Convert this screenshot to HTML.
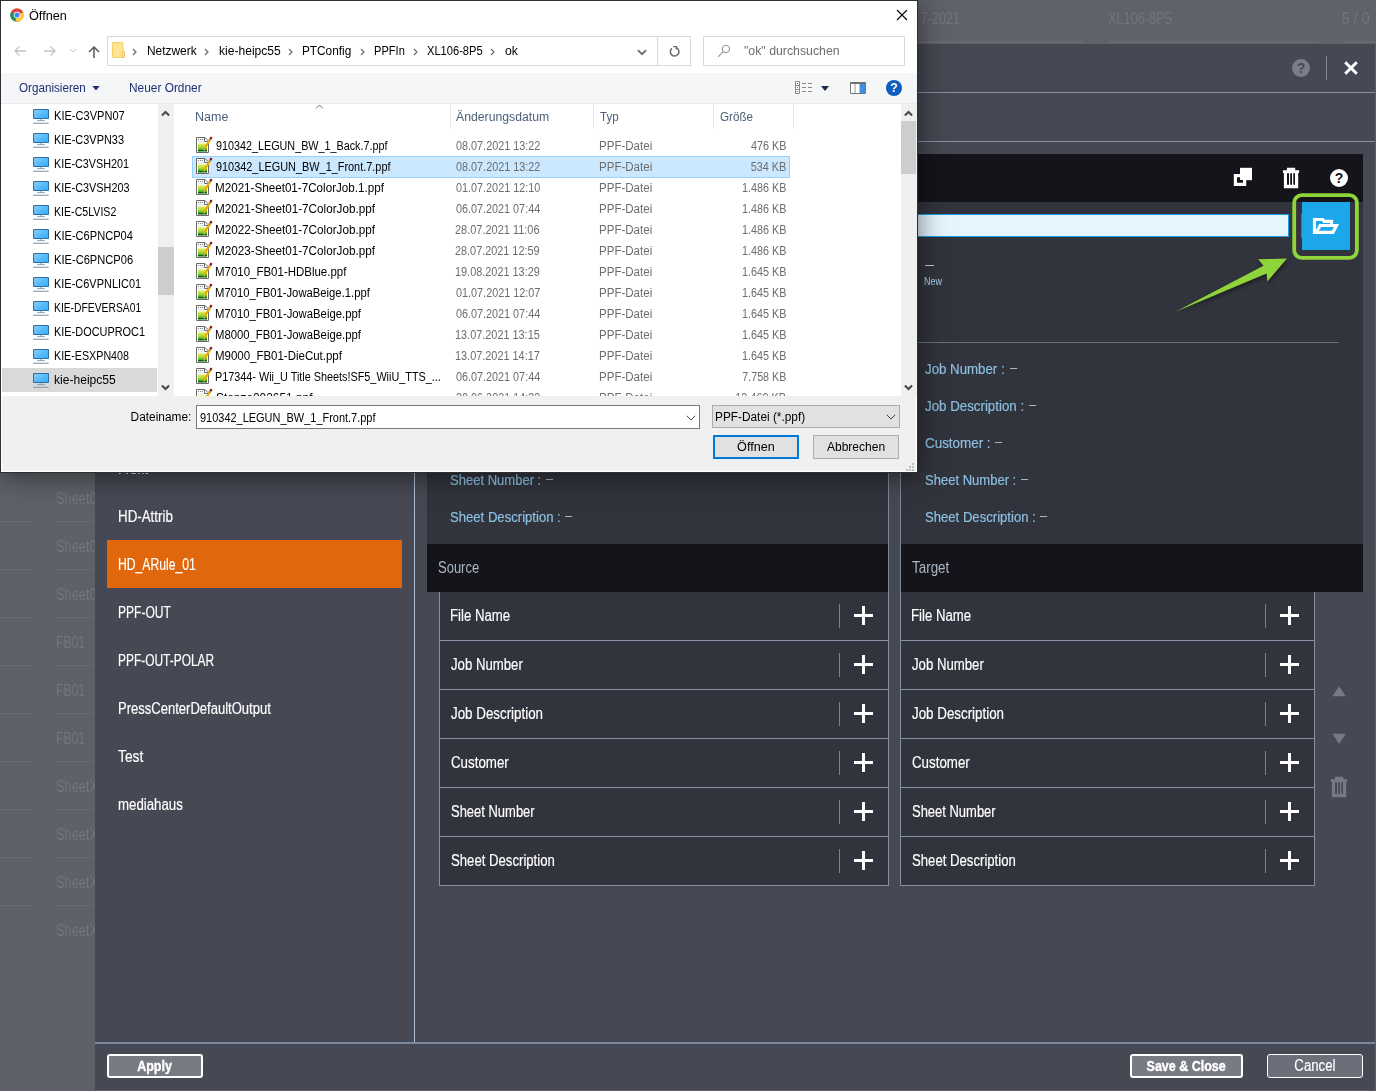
<!DOCTYPE html>
<html lang="de"><head><meta charset="utf-8"><title>Öffnen</title>
<style>
*{box-sizing:border-box;margin:0;padding:0}
html,body{width:1376px;height:1091px;overflow:hidden;background:#5e6169;font-family:"Liberation Sans",sans-serif}
.abs,.abs *{position:absolute}
#app{left:0;top:0;width:1376px;height:1091px;overflow:hidden}
.t{display:block;white-space:nowrap}
</style></head><body>
<div id="app" class="abs">

<div style="left:0;top:0;width:1376px;height:44px;background:#5f6269"></div>
<div style="left:0;top:44px;width:95px;height:1047px;background:#5e6169"></div>
<span class="t" style="left:909.53px;top:8.76px;font-size:16px;line-height:20px;color:#72757d;transform:scaleX(0.7900);transform-origin:100% 50%">7-2021</span>
<span class="t" style="left:1107.75px;top:8.76px;font-size:16px;line-height:20px;color:#72757d;transform:scaleX(0.7963);transform-origin:0 50%">XL106-8P5</span>
<span class="t" style="left:1342.43px;top:8.76px;font-size:16px;line-height:20px;color:#72757d;transform:scaleX(0.8857);transform-origin:0 50%">5 / 0</span>
<div style="left:840px;top:41px;width:244px;height:2px;background:#676a72"></div>
<div style="left:1108px;top:41px;width:210px;height:2px;background:#676a72"></div>
<div style="left:1343px;top:41px;width:33px;height:2px;background:#676a72"></div>
<span class="t" style="left:55.92px;top:488.76px;font-size:16px;line-height:20px;color:#72757d;transform:scaleX(0.8000);transform-origin:0 50%">Sheet0</span>
<span class="t" style="left:55.92px;top:536.76px;font-size:16px;line-height:20px;color:#72757d;transform:scaleX(0.8000);transform-origin:0 50%">Sheet0</span>
<span class="t" style="left:55.92px;top:584.76px;font-size:16px;line-height:20px;color:#72757d;transform:scaleX(0.8000);transform-origin:0 50%">Sheet0</span>
<span class="t" style="left:55.53px;top:632.76px;font-size:16px;line-height:20px;color:#72757d;transform:scaleX(0.7600);transform-origin:0 50%">FB01</span>
<span class="t" style="left:55.53px;top:680.76px;font-size:16px;line-height:20px;color:#72757d;transform:scaleX(0.7600);transform-origin:0 50%">FB01</span>
<span class="t" style="left:55.53px;top:728.76px;font-size:16px;line-height:20px;color:#72757d;transform:scaleX(0.7600);transform-origin:0 50%">FB01</span>
<span class="t" style="left:55.92px;top:776.76px;font-size:16px;line-height:20px;color:#72757d;transform:scaleX(0.8000);transform-origin:0 50%">SheetX</span>
<span class="t" style="left:55.92px;top:824.76px;font-size:16px;line-height:20px;color:#72757d;transform:scaleX(0.8000);transform-origin:0 50%">SheetX</span>
<span class="t" style="left:55.92px;top:872.76px;font-size:16px;line-height:20px;color:#72757d;transform:scaleX(0.8000);transform-origin:0 50%">SheetX</span>
<span class="t" style="left:55.92px;top:920.76px;font-size:16px;line-height:20px;color:#72757d;transform:scaleX(0.8000);transform-origin:0 50%">SheetX</span>
<div style="left:0;top:521px;width:32px;height:1px;background:#676a72"></div>
<div style="left:56px;top:521px;width:40px;height:1px;background:#676a72"></div>
<div style="left:0;top:569px;width:32px;height:1px;background:#676a72"></div>
<div style="left:56px;top:569px;width:40px;height:1px;background:#676a72"></div>
<div style="left:0;top:617px;width:32px;height:1px;background:#676a72"></div>
<div style="left:56px;top:617px;width:40px;height:1px;background:#676a72"></div>
<div style="left:0;top:665px;width:32px;height:1px;background:#676a72"></div>
<div style="left:56px;top:665px;width:40px;height:1px;background:#676a72"></div>
<div style="left:0;top:713px;width:32px;height:1px;background:#676a72"></div>
<div style="left:56px;top:713px;width:40px;height:1px;background:#676a72"></div>
<div style="left:0;top:761px;width:32px;height:1px;background:#676a72"></div>
<div style="left:56px;top:761px;width:40px;height:1px;background:#676a72"></div>
<div style="left:0;top:809px;width:32px;height:1px;background:#676a72"></div>
<div style="left:56px;top:809px;width:40px;height:1px;background:#676a72"></div>
<div style="left:0;top:857px;width:32px;height:1px;background:#676a72"></div>
<div style="left:56px;top:857px;width:40px;height:1px;background:#676a72"></div>
<div style="left:0;top:905px;width:32px;height:1px;background:#676a72"></div>
<div style="left:56px;top:905px;width:40px;height:1px;background:#676a72"></div>
<div style="left:95px;top:44px;width:1281px;height:1047px;background:#464853;border-right:1px solid #5a5d68;border-bottom:1px solid #5a5d68"></div>
<div style="left:95px;top:92px;width:1280px;height:1px;background:#8592a5"></div>
<div style="left:95px;top:141px;width:1280px;height:1px;background:#8592a5"></div>
<div style="left:1292px;top:59px;width:18px;height:18px;border-radius:50%;background:#7b7e87"></div>
<span style="left:1292px;top:59px;width:18px;height:18px;text-align:center;font:bold 14px/19px 'Liberation Sans',sans-serif;color:#464853">?</span>
<div style="left:1326px;top:56px;width:1px;height:24px;background:#868993"></div>
<svg style="left:1343px;top:60px" width="16" height="16" viewBox="0 0 16 16"><path d="M2.2 2.2L13.8 13.8M13.8 2.2L2.2 13.8" stroke="#fff" stroke-width="3" fill="none"/></svg>
<div style="left:414px;top:142px;width:1px;height:900px;background:#adc0d8"></div>
<div style="left:107px;top:540px;width:295px;height:48px;background:#e0670b"></div>
<span class="t" style="left:117.73px;top:458.51px;font-size:16px;line-height:20px;color:#fff;transform:scaleX(0.8000);transform-origin:0 50%;-webkit-text-stroke:.18px #fff">Front</span>
<span class="t" style="left:117.68px;top:506.51px;font-size:16px;line-height:20px;color:#fff;transform:scaleX(0.8341);transform-origin:0 50%;-webkit-text-stroke:.18px #fff">HD-Attrib</span>
<span class="t" style="left:117.78px;top:554.51px;font-size:16px;line-height:20px;color:#fff;transform:scaleX(0.7607);transform-origin:0 50%;-webkit-text-stroke:.18px #fff">HD_ARule_01</span>
<span class="t" style="left:117.78px;top:602.51px;font-size:16px;line-height:20px;color:#fff;transform:scaleX(0.7539);transform-origin:0 50%;-webkit-text-stroke:.18px #fff">PPF-OUT</span>
<span class="t" style="left:117.79px;top:650.51px;font-size:16px;line-height:20px;color:#fff;transform:scaleX(0.7463);transform-origin:0 50%;-webkit-text-stroke:.18px #fff">PPF-OUT-POLAR</span>
<span class="t" style="left:117.71px;top:698.51px;font-size:16px;line-height:20px;color:#fff;transform:scaleX(0.8145);transform-origin:0 50%;-webkit-text-stroke:.18px #fff">PressCenterDefaultOutput</span>
<span class="t" style="left:118.47px;top:746.51px;font-size:16px;line-height:20px;color:#fff;transform:scaleX(0.8633);transform-origin:0 50%;-webkit-text-stroke:.18px #fff">Test</span>
<span class="t" style="left:117.89px;top:794.51px;font-size:16px;line-height:20px;color:#fff;transform:scaleX(0.8285);transform-origin:0 50%;-webkit-text-stroke:.18px #fff">mediahaus</span>
<div style="left:427px;top:154px;width:461px;height:390px;background:#32343d"></div>
<div style="left:427px;top:154px;width:461px;height:48px;background:#14141a"></div>
<div style="left:427px;top:544px;width:461px;height:48px;background:#14141a"></div>
<div style="left:901px;top:154px;width:462px;height:390px;background:#32343d"></div>
<div style="left:901px;top:154px;width:462px;height:48px;background:#14141a"></div>
<div style="left:901px;top:544px;width:462px;height:48px;background:#14141a"></div>
<div style="left:888px;top:154px;width:1px;height:732px;background:#7b889c"></div>
<div style="left:900px;top:154px;width:1px;height:732px;background:#7b889c"></div>
<span class="t" style="left:438.17px;top:558.33px;font-size:15.8px;line-height:20px;color:#abb7c6;transform:scaleX(0.8220);transform-origin:0 50%">Source</span>
<span class="t" style="left:912.48px;top:558.33px;font-size:15.8px;line-height:20px;color:#abb7c6;transform:scaleX(0.8500);transform-origin:0 50%">Target</span>
<div style="left:918px;top:342px;width:421px;height:1px;background:#69707c"></div>
<span class="t" style="left:925.30px;top:359.30px;font-size:15px;line-height:19px;color:#8cc0e2;transform:scaleX(0.8842);transform-origin:0 50%;-webkit-text-stroke:.18px #8cc0e2">Job Number :</span>
<span class="t" style="left:1009.50px;top:356.90px;font-size:15px;line-height:19px;color:#a9b2be;transform:scaleX(0.8631);transform-origin:0 50%">–</span>
<span class="t" style="left:925.30px;top:396.30px;font-size:15px;line-height:19px;color:#8cc0e2;transform:scaleX(0.8872);transform-origin:0 50%;-webkit-text-stroke:.18px #8cc0e2">Job Description :</span>
<span class="t" style="left:1029.00px;top:393.90px;font-size:15px;line-height:19px;color:#a9b2be;transform:scaleX(0.8631);transform-origin:0 50%">–</span>
<span class="t" style="left:924.83px;top:433.30px;font-size:15px;line-height:19px;color:#8cc0e2;transform:scaleX(0.8940);transform-origin:0 50%;-webkit-text-stroke:.18px #8cc0e2">Customer :</span>
<span class="t" style="left:994.95px;top:430.90px;font-size:15px;line-height:19px;color:#a9b2be;transform:scaleX(0.8631);transform-origin:0 50%">–</span>
<span class="t" style="left:924.91px;top:470.30px;font-size:15px;line-height:19px;color:#8cc0e2;transform:scaleX(0.8685);transform-origin:0 50%;-webkit-text-stroke:.18px #8cc0e2">Sheet Number :</span>
<span class="t" style="left:1020.75px;top:467.90px;font-size:15px;line-height:19px;color:#a9b2be;transform:scaleX(0.8631);transform-origin:0 50%">–</span>
<span class="t" style="left:924.91px;top:507.30px;font-size:15px;line-height:19px;color:#8cc0e2;transform:scaleX(0.8739);transform-origin:0 50%;-webkit-text-stroke:.18px #8cc0e2">Sheet Description :</span>
<span class="t" style="left:1040.25px;top:504.90px;font-size:15px;line-height:19px;color:#a9b2be;transform:scaleX(0.8631);transform-origin:0 50%">–</span>
<span class="t" style="left:449.91px;top:470.30px;font-size:15px;line-height:19px;color:#8cc0e2;transform:scaleX(0.8685);transform-origin:0 50%;-webkit-text-stroke:.18px #8cc0e2">Sheet Number :</span>
<span class="t" style="left:545.75px;top:467.90px;font-size:15px;line-height:19px;color:#a9b2be;transform:scaleX(0.8631);transform-origin:0 50%">–</span>
<span class="t" style="left:449.91px;top:507.30px;font-size:15px;line-height:19px;color:#8cc0e2;transform:scaleX(0.8739);transform-origin:0 50%;-webkit-text-stroke:.18px #8cc0e2">Sheet Description :</span>
<span class="t" style="left:565.25px;top:504.90px;font-size:15px;line-height:19px;color:#a9b2be;transform:scaleX(0.8631);transform-origin:0 50%">–</span>
<div style="left:925px;top:265px;width:9px;height:1px;background:#c4c8d0"></div>
<span class="t" style="left:923.78px;top:276.14px;font-size:10px;line-height:12px;color:#a3d2f0;transform:scaleX(0.8961);transform-origin:0 50%">New</span>
<div style="left:901px;top:214px;width:388px;height:23px;background:#e5f5fd;border-top:1px solid #1a9fe6;border-bottom:1px solid #1a9fe6;border-right:1px solid #1a9fe6"></div>
<div style="left:1301px;top:214px;width:1px;height:24px;background:#6a6d77"></div>
<div style="left:1302px;top:202px;width:48px;height:48px;background:#1ba7e9"></div>
<svg style="left:1290px;top:191px" width="72" height="72" viewBox="1290 191 72 72"><rect x="1294.2" y="195.1" width="62.7" height="62.7" rx="7.5" ry="7.5" fill="none" stroke="#8fd43a" stroke-width="3.8"/></svg>
<svg style="left:1312px;top:217px" width="28" height="18" viewBox="0 0 28 18"><path fill-rule="evenodd" fill="#fff" d="M0.9 1.1H11.5L13 2.8H21.1V6.9H27.1L21.9 17.1H0.9Z M4 4H9.9L11.5 5.9H18V6.9H7.2L4 13Z M9.2 10.1H22.1L19.9 13.8H6.9Z"/></svg>
<svg style="left:1165px;top:250px;filter:drop-shadow(1px 2px 2px rgba(0,0,0,.45))" width="130" height="70" viewBox="1165 250 130 70"><path d="M1175.5 311.7L1263.5 265.8L1258.2 259.3L1287 258.4L1267.4 281.6L1266.6 273.6Z" fill="#8fd43a"/></svg>
<svg style="left:1233px;top:167px" width="20" height="20" viewBox="0 0 20 20"><path d="M7 0.8H19V13.2H7Z" fill="#fff"/><path d="M0.8 7H13.2V19H0.8Z" fill="#fff"/><path d="M4 10.2H7V13H10V15.8H4Z" fill="#14141a"/></svg>
<svg style="left:1282px;top:167px" width="18" height="22" viewBox="0 0 18 22"><path d="M4.9 0.8H13.2V3.2H17.1V5.9H16.2V21.2H1.9V5.9H0.9V3.2H4.9Z" fill="#fff"/><path d="M5 6.3H7V17.7H5ZM8.2 6.3H10V17.7H8.2ZM11.3 6.3H13V17.7H11.3Z" fill="#14141a"/></svg>
<div style="left:1330px;top:169px;width:18px;height:18px;border-radius:50%;background:#fff"></div>
<span style="left:1330px;top:169px;width:18px;height:18px;text-align:center;font:bold 14px/19px 'Liberation Sans',sans-serif;color:#14141a">?</span>
<div style="left:439px;top:592px;width:450px;height:294px;background:#32343d;border:1px solid #8491a5;border-top:none"></div>
<span class="t" style="left:450.44px;top:606.01px;font-size:16px;line-height:20px;color:#fff;transform:scaleX(0.8244);transform-origin:0 50%;-webkit-text-stroke:.18px #fff">File Name</span>
<div style="left:839px;top:604px;width:1px;height:24px;background:#7d818c"></div>
<div style="left:854px;top:614px;width:19px;height:3px;background:#fff"></div>
<div style="left:862px;top:606px;width:3px;height:19px;background:#fff"></div>
<div style="left:439px;top:640px;width:450px;height:1px;background:#8491a5"></div>
<span class="t" style="left:451.30px;top:655.01px;font-size:16px;line-height:20px;color:#fff;transform:scaleX(0.8245);transform-origin:0 50%;-webkit-text-stroke:.18px #fff">Job Number</span>
<div style="left:839px;top:653px;width:1px;height:24px;background:#7d818c"></div>
<div style="left:854px;top:663px;width:19px;height:3px;background:#fff"></div>
<div style="left:862px;top:655px;width:3px;height:19px;background:#fff"></div>
<div style="left:439px;top:689px;width:450px;height:1px;background:#8491a5"></div>
<span class="t" style="left:451.30px;top:704.01px;font-size:16px;line-height:20px;color:#fff;transform:scaleX(0.8346);transform-origin:0 50%;-webkit-text-stroke:.18px #fff">Job Description</span>
<div style="left:839px;top:702px;width:1px;height:24px;background:#7d818c"></div>
<div style="left:854px;top:712px;width:19px;height:3px;background:#fff"></div>
<div style="left:862px;top:704px;width:3px;height:19px;background:#fff"></div>
<div style="left:439px;top:738px;width:450px;height:1px;background:#8491a5"></div>
<span class="t" style="left:450.83px;top:753.01px;font-size:16px;line-height:20px;color:#fff;transform:scaleX(0.8328);transform-origin:0 50%;-webkit-text-stroke:.18px #fff">Customer</span>
<div style="left:839px;top:751px;width:1px;height:24px;background:#7d818c"></div>
<div style="left:854px;top:761px;width:19px;height:3px;background:#fff"></div>
<div style="left:862px;top:753px;width:3px;height:19px;background:#fff"></div>
<div style="left:439px;top:787px;width:450px;height:1px;background:#8491a5"></div>
<span class="t" style="left:450.92px;top:802.01px;font-size:16px;line-height:20px;color:#fff;transform:scaleX(0.8108);transform-origin:0 50%;-webkit-text-stroke:.18px #fff">Sheet Number</span>
<div style="left:839px;top:800px;width:1px;height:24px;background:#7d818c"></div>
<div style="left:854px;top:810px;width:19px;height:3px;background:#fff"></div>
<div style="left:862px;top:802px;width:3px;height:19px;background:#fff"></div>
<div style="left:439px;top:836px;width:450px;height:1px;background:#8491a5"></div>
<span class="t" style="left:450.91px;top:851.01px;font-size:16px;line-height:20px;color:#fff;transform:scaleX(0.8221);transform-origin:0 50%;-webkit-text-stroke:.18px #fff">Sheet Description</span>
<div style="left:839px;top:849px;width:1px;height:24px;background:#7d818c"></div>
<div style="left:854px;top:859px;width:19px;height:3px;background:#fff"></div>
<div style="left:862px;top:851px;width:3px;height:19px;background:#fff"></div>
<div style="left:900px;top:592px;width:415px;height:294px;background:#32343d;border:1px solid #8491a5;border-top:none"></div>
<span class="t" style="left:911.44px;top:606.01px;font-size:16px;line-height:20px;color:#fff;transform:scaleX(0.8244);transform-origin:0 50%;-webkit-text-stroke:.18px #fff">File Name</span>
<div style="left:1265px;top:604px;width:1px;height:24px;background:#7d818c"></div>
<div style="left:1280px;top:614px;width:19px;height:3px;background:#fff"></div>
<div style="left:1288px;top:606px;width:3px;height:19px;background:#fff"></div>
<div style="left:900px;top:640px;width:415px;height:1px;background:#8491a5"></div>
<span class="t" style="left:912.30px;top:655.01px;font-size:16px;line-height:20px;color:#fff;transform:scaleX(0.8245);transform-origin:0 50%;-webkit-text-stroke:.18px #fff">Job Number</span>
<div style="left:1265px;top:653px;width:1px;height:24px;background:#7d818c"></div>
<div style="left:1280px;top:663px;width:19px;height:3px;background:#fff"></div>
<div style="left:1288px;top:655px;width:3px;height:19px;background:#fff"></div>
<div style="left:900px;top:689px;width:415px;height:1px;background:#8491a5"></div>
<span class="t" style="left:912.30px;top:704.01px;font-size:16px;line-height:20px;color:#fff;transform:scaleX(0.8346);transform-origin:0 50%;-webkit-text-stroke:.18px #fff">Job Description</span>
<div style="left:1265px;top:702px;width:1px;height:24px;background:#7d818c"></div>
<div style="left:1280px;top:712px;width:19px;height:3px;background:#fff"></div>
<div style="left:1288px;top:704px;width:3px;height:19px;background:#fff"></div>
<div style="left:900px;top:738px;width:415px;height:1px;background:#8491a5"></div>
<span class="t" style="left:911.83px;top:753.01px;font-size:16px;line-height:20px;color:#fff;transform:scaleX(0.8328);transform-origin:0 50%;-webkit-text-stroke:.18px #fff">Customer</span>
<div style="left:1265px;top:751px;width:1px;height:24px;background:#7d818c"></div>
<div style="left:1280px;top:761px;width:19px;height:3px;background:#fff"></div>
<div style="left:1288px;top:753px;width:3px;height:19px;background:#fff"></div>
<div style="left:900px;top:787px;width:415px;height:1px;background:#8491a5"></div>
<span class="t" style="left:911.92px;top:802.01px;font-size:16px;line-height:20px;color:#fff;transform:scaleX(0.8108);transform-origin:0 50%;-webkit-text-stroke:.18px #fff">Sheet Number</span>
<div style="left:1265px;top:800px;width:1px;height:24px;background:#7d818c"></div>
<div style="left:1280px;top:810px;width:19px;height:3px;background:#fff"></div>
<div style="left:1288px;top:802px;width:3px;height:19px;background:#fff"></div>
<div style="left:900px;top:836px;width:415px;height:1px;background:#8491a5"></div>
<span class="t" style="left:911.91px;top:851.01px;font-size:16px;line-height:20px;color:#fff;transform:scaleX(0.8221);transform-origin:0 50%;-webkit-text-stroke:.18px #fff">Sheet Description</span>
<div style="left:1265px;top:849px;width:1px;height:24px;background:#7d818c"></div>
<div style="left:1280px;top:859px;width:19px;height:3px;background:#fff"></div>
<div style="left:1288px;top:851px;width:3px;height:19px;background:#fff"></div>
<svg style="left:1330px;top:684px" width="18" height="62" viewBox="1330 684 18 62"><path d="M1332.4 696.3L1339.1 686.2L1345.8 696.3Z" fill="#777a84"/><path d="M1332.4 733.8H1345.8L1339.1 743.8Z" fill="#777a84"/></svg>
<svg style="left:1329.7px;top:775.5px" width="18" height="22" viewBox="0 0 18 22"><path d="M4.9 0.8H13.2V3.2H17.1V5.9H16.2V21.2H1.9V5.9H0.9V3.2H4.9Z" fill="#777a84"/><path d="M5 6.3H7V17.7H5ZM8.2 6.3H10V17.7H8.2ZM11.3 6.3H13V17.7H11.3Z" fill="#464853"/></svg>
<div style="left:95px;top:1042px;width:1280px;height:2px;background:#7c899d"></div>
<div style="left:107px;top:1054px;width:96px;height:24px;background:#787b84;border:2px solid #fff;border-radius:3px"></div>
<span class="t" style="left:133.47px;top:1056.43px;font-size:15.5px;line-height:19px;color:#fff;transform:scaleX(0.8070);transform-origin:50% 50%;font-weight:bold;-webkit-text-stroke:.42px #fff">Apply</span>
<div style="left:1130px;top:1054px;width:113px;height:24px;background:#787b84;border:2px solid #fff;border-radius:3px"></div>
<span class="t" style="left:1137.39px;top:1056.43px;font-size:15.5px;line-height:19px;color:#fff;transform:scaleX(0.8044);transform-origin:50% 50%;font-weight:bold;-webkit-text-stroke:.42px #fff">Save &amp; Close</span>
<div style="left:1267px;top:1054px;width:96px;height:24px;background:#6c6f79;border:1px solid #fff;border-radius:3px"></div>
<span class="t" style="left:1290.10px;top:1055.76px;font-size:16px;line-height:20px;color:#fff;transform:scaleX(0.8250);transform-origin:50% 50%;-webkit-text-stroke:.18px #fff">Cancel</span>
<div id="dlg" style="left:0;top:0;width:918px;height:473px;background:#fff;border:1px solid #2e2f33;box-shadow:0 2px 26px 1px rgba(0,0,0,.5)">
<div style="left:-1px;top:-1px;width:918px;height:473px">
<svg style="left:10px;top:8px" width="14" height="14" viewBox="0 0 16 16"><circle cx="8" cy="8" r="7.6" fill="#db4437"/><path d="M8 8L1.4 4.2A7.6 7.6 0 0 0 4.2 14.6Z" fill="#0f9d58"/><path d="M8 8L4.2 14.6A7.6 7.6 0 0 0 11.8 14.6Z" fill="#0f9d58"/><path d="M8 8H15.6A7.6 7.6 0 0 1 8 15.6Z" fill="#ffcd40"/><path d="M8 15.6A7.6 7.6 0 0 0 15 5L8 8L6 15.3Z" fill="#ffcd40"/><circle cx="8" cy="8" r="3.7" fill="#fff"/><circle cx="8" cy="8" r="2.9" fill="#4285f4"/></svg>
<span class="t" style="left:29.43px;top:9.14px;font-size:12px;line-height:15px;color:#000;transform:scaleX(1.0561);transform-origin:0 50%">Öffnen</span>
<svg style="left:896px;top:9px" width="12" height="12" viewBox="0 0 12 12"><path d="M1 1L11 11M11 1L1 11" stroke="#000" stroke-width="1.1" fill="none"/></svg>
<svg style="left:13px;top:44px" width="14" height="14" viewBox="0 0 14 14"><path d="M13 7H2M6.5 2.5L2 7l4.5 4.5" stroke="#c4c4c4" stroke-width="1.3" fill="none"/></svg>
<svg style="left:43px;top:44px" width="14" height="14" viewBox="0 0 14 14"><path d="M1 7H12M7.5 2.5L12 7l-4.5 4.5" stroke="#c4c4c4" stroke-width="1.3" fill="none"/></svg>
<svg style="left:69px;top:48px" width="8" height="5" viewBox="0 0 8 5"><path d="M1 1l3 3 3-3" stroke="#c4c4c4" stroke-width="1" fill="none"/></svg>
<svg style="left:87px;top:45px" width="14" height="14" viewBox="0 0 14 14"><path d="M7 13V2M2 7L7 2l5 5" stroke="#5a5a5a" stroke-width="1.5" fill="none"/></svg>
<div style="left:107px;top:36px;width:551px;height:30px;border:1px solid #d9d9d9;background:#fff"></div>
<div style="left:657px;top:36px;width:34px;height:30px;border:1px solid #d9d9d9;background:#fff"></div>
<div style="left:703px;top:36px;width:202px;height:30px;border:1px solid #d9d9d9;background:#fff"></div>
<svg style="left:112px;top:42px" width="13" height="16" viewBox="0 0 13 16"><path d="M0.5 0.5h10.5v15h-10.5z" fill="#ffe591" stroke="#f3d06a"/><path d="M10.2 9.5h2.3v6h-2.3z" fill="#ffe591" stroke="#ecc55a" stroke-width=".9"/></svg>
<svg style="left:132px;top:47.5px" width="5" height="8" viewBox="0 0 5 8"><path d="M1 1l3 3-3 3" stroke="#6a6a6a" stroke-width="1.2" fill="none"/></svg>
<svg style="left:204px;top:47.5px" width="5" height="8" viewBox="0 0 5 8"><path d="M1 1l3 3-3 3" stroke="#6a6a6a" stroke-width="1.2" fill="none"/></svg>
<svg style="left:288px;top:47.5px" width="5" height="8" viewBox="0 0 5 8"><path d="M1 1l3 3-3 3" stroke="#6a6a6a" stroke-width="1.2" fill="none"/></svg>
<svg style="left:359.5px;top:47.5px" width="5" height="8" viewBox="0 0 5 8"><path d="M1 1l3 3-3 3" stroke="#6a6a6a" stroke-width="1.2" fill="none"/></svg>
<svg style="left:412.75px;top:47.5px" width="5" height="8" viewBox="0 0 5 8"><path d="M1 1l3 3-3 3" stroke="#6a6a6a" stroke-width="1.2" fill="none"/></svg>
<svg style="left:490px;top:47.5px" width="5" height="8" viewBox="0 0 5 8"><path d="M1 1l3 3-3 3" stroke="#6a6a6a" stroke-width="1.2" fill="none"/></svg>
<span class="t" style="left:146.55px;top:44.14px;font-size:12px;line-height:15px;color:#000;transform:scaleX(0.9921);transform-origin:0 50%">Netzwerk</span>
<span class="t" style="left:218.72px;top:44.14px;font-size:12px;line-height:15px;color:#000;transform:scaleX(1.0063);transform-origin:0 50%">kie-heipc55</span>
<span class="t" style="left:302.06px;top:44.14px;font-size:12px;line-height:15px;color:#000;transform:scaleX(0.9834);transform-origin:0 50%">PTConfig</span>
<span class="t" style="left:373.61px;top:44.14px;font-size:12px;line-height:15px;color:#000;transform:scaleX(0.9233);transform-origin:0 50%">PPFIn</span>
<span class="t" style="left:426.78px;top:44.14px;font-size:12px;line-height:15px;color:#000;transform:scaleX(0.9269);transform-origin:0 50%">XL106-8P5</span>
<span class="t" style="left:504.51px;top:44.14px;font-size:12px;line-height:15px;color:#000;transform:scaleX(1.0212);transform-origin:0 50%">ok</span>
<svg style="left:636px;top:48px" width="12" height="9" viewBox="636 48 12 9"><path d="M637.9 50.1L642 54.2L646.1 50.1" stroke="#6b6b6b" stroke-width="1.8" fill="none"/></svg>
<svg style="left:668px;top:44px" width="14" height="14" viewBox="668 44 14 14"><path d="M676.6 47.9A4.3 4.3 0 1 1 671.9 48.4" stroke="#6b6b6b" stroke-width="1.5" fill="none"/><path d="M673.2 46.6H676.4V49.6" stroke="#6b6b6b" stroke-width="1.4" fill="none"/></svg>
<svg style="left:716px;top:43px" width="16" height="16" viewBox="716 43 16 16"><circle cx="725.9" cy="49" r="3.7" stroke="#8a8aa0" stroke-width="1" fill="none"/><path d="M723.2 51.7L718.1 56.9" stroke="#a88a8a" stroke-width="1.1"/></svg>
<span class="t" style="left:743.81px;top:44.14px;font-size:12px;line-height:15px;color:#6d6d6d;transform:scaleX(1.0256);transform-origin:0 50%">"ok" durchsuchen</span>
<div style="left:1px;top:73px;width:916px;height:30px;background:#f5f6f7"></div>
<span class="t" style="left:19.18px;top:81.14px;font-size:12px;line-height:15px;color:#1b2f72;transform:scaleX(0.9712);transform-origin:0 50%">Organisieren</span>
<svg style="left:92px;top:86px" width="8" height="5" viewBox="0 0 8 5"><path d="M0.4 0h7.2l-3.6 4.4z" fill="#1b2f72"/></svg>
<span class="t" style="left:129.45px;top:81.14px;font-size:12px;line-height:15px;color:#1b2f72;transform:scaleX(0.9898);transform-origin:0 50%">Neuer Ordner</span>
<svg style="left:795px;top:81px" width="17" height="13" viewBox="0 0 17 13"><g stroke="#8a8a8a" stroke-width="1" fill="#fff"><path d="M0.5 0.5h4v12h-4z"/><path d="M0.5 4.5h4M0.5 8.5h4M7 2.5h4M13 2.5h4M7 6.5h4M13 6.5h4M7 10.5h4M13 10.5h4" fill="none"/></g><path d="M2 2h1v1h-1z" fill="#555"/><path d="M2 6h1v1h-1z" fill="#3a7bd5"/><path d="M2 10h1v1h-1z" fill="#d33"/></svg>
<svg style="left:820.5px;top:85.5px" width="8" height="5" viewBox="0 0 8 5"><path d="M0 0h8l-4 5z" fill="#1a2a4a"/></svg>
<svg style="left:850px;top:82px" width="16" height="12" viewBox="0 0 16 12"><path d="M0.5 0.5h15v11h-15z" fill="#fff" stroke="#777"/><path d="M9.5 1.5h5.5v9.5h-5.5z" fill="#3f8fe0"/><path d="M5 1v10" stroke="#999"/><path d="M0.5 1.2h15" stroke="#666" stroke-width="1.4"/></svg>
<div style="left:886px;top:80px;width:16px;height:16px;border-radius:50%;background:#0b5cbd"></div>
<span style="left:886px;top:80px;width:16px;height:16px;text-align:center;font:bold 12px/16px 'Liberation Sans',sans-serif;color:#fff">?</span>
<div style="left:1px;top:103px;width:916px;height:293px;overflow:hidden;background:#fff">
<div style="left:0;top:0;width:916px;height:1px;background:#e9ebed;z-index:3"></div>
<div style="left:1px;top:265px;width:155px;height:24px;background:#d9d9d9"></div>
<svg style="left:32px;top:6px" width="16" height="16" viewBox="0 0 16 16"><defs><linearGradient id="m0" x1="0" y1="0" x2="1" y2="1"><stop offset="0" stop-color="#8fd0fd"/><stop offset=".5" stop-color="#5abcfb"/><stop offset="1" stop-color="#30adfa"/></linearGradient></defs><path d="M0.5 0.5h15v9h-15z" fill="url(#m0)" stroke="#2d6f9e"/><path d="M7 10h2v1.2h-2z" fill="#b8c6d4"/><path d="M4.2 11.2h7.6v.9h-7.6z" fill="#7f97ae"/><path d="M0.3 13.7h15.4v1.2H0.3z" fill="#8fa2b7"/></svg>
<span class="t" style="left:52.72px;top:6.14px;font-size:12px;line-height:15px;color:#000;transform:scaleX(0.9218);transform-origin:0 50%">KIE-C3VPN07</span>
<svg style="left:32px;top:30px" width="16" height="16" viewBox="0 0 16 16"><defs><linearGradient id="m1" x1="0" y1="0" x2="1" y2="1"><stop offset="0" stop-color="#8fd0fd"/><stop offset=".5" stop-color="#5abcfb"/><stop offset="1" stop-color="#30adfa"/></linearGradient></defs><path d="M0.5 0.5h15v9h-15z" fill="url(#m1)" stroke="#2d6f9e"/><path d="M7 10h2v1.2h-2z" fill="#b8c6d4"/><path d="M4.2 11.2h7.6v.9h-7.6z" fill="#7f97ae"/><path d="M0.3 13.7h15.4v1.2H0.3z" fill="#8fa2b7"/></svg>
<span class="t" style="left:52.72px;top:30.14px;font-size:12px;line-height:15px;color:#000;transform:scaleX(0.9131);transform-origin:0 50%">KIE-C3VPN33</span>
<svg style="left:32px;top:54px" width="16" height="16" viewBox="0 0 16 16"><defs><linearGradient id="m2" x1="0" y1="0" x2="1" y2="1"><stop offset="0" stop-color="#8fd0fd"/><stop offset=".5" stop-color="#5abcfb"/><stop offset="1" stop-color="#30adfa"/></linearGradient></defs><path d="M0.5 0.5h15v9h-15z" fill="url(#m2)" stroke="#2d6f9e"/><path d="M7 10h2v1.2h-2z" fill="#b8c6d4"/><path d="M4.2 11.2h7.6v.9h-7.6z" fill="#7f97ae"/><path d="M0.3 13.7h15.4v1.2H0.3z" fill="#8fa2b7"/></svg>
<span class="t" style="left:52.74px;top:54.14px;font-size:12px;line-height:15px;color:#000;transform:scaleX(0.9005);transform-origin:0 50%">KIE-C3VSH201</span>
<svg style="left:32px;top:78px" width="16" height="16" viewBox="0 0 16 16"><defs><linearGradient id="m3" x1="0" y1="0" x2="1" y2="1"><stop offset="0" stop-color="#8fd0fd"/><stop offset=".5" stop-color="#5abcfb"/><stop offset="1" stop-color="#30adfa"/></linearGradient></defs><path d="M0.5 0.5h15v9h-15z" fill="url(#m3)" stroke="#2d6f9e"/><path d="M7 10h2v1.2h-2z" fill="#b8c6d4"/><path d="M4.2 11.2h7.6v.9h-7.6z" fill="#7f97ae"/><path d="M0.3 13.7h15.4v1.2H0.3z" fill="#8fa2b7"/></svg>
<span class="t" style="left:52.73px;top:78.14px;font-size:12px;line-height:15px;color:#000;transform:scaleX(0.9060);transform-origin:0 50%">KIE-C3VSH203</span>
<svg style="left:32px;top:102px" width="16" height="16" viewBox="0 0 16 16"><defs><linearGradient id="m4" x1="0" y1="0" x2="1" y2="1"><stop offset="0" stop-color="#8fd0fd"/><stop offset=".5" stop-color="#5abcfb"/><stop offset="1" stop-color="#30adfa"/></linearGradient></defs><path d="M0.5 0.5h15v9h-15z" fill="url(#m4)" stroke="#2d6f9e"/><path d="M7 10h2v1.2h-2z" fill="#b8c6d4"/><path d="M4.2 11.2h7.6v.9h-7.6z" fill="#7f97ae"/><path d="M0.3 13.7h15.4v1.2H0.3z" fill="#8fa2b7"/></svg>
<span class="t" style="left:52.75px;top:102.14px;font-size:12px;line-height:15px;color:#000;transform:scaleX(0.8848);transform-origin:0 50%">KIE-C5LVIS2</span>
<svg style="left:32px;top:126px" width="16" height="16" viewBox="0 0 16 16"><defs><linearGradient id="m5" x1="0" y1="0" x2="1" y2="1"><stop offset="0" stop-color="#8fd0fd"/><stop offset=".5" stop-color="#5abcfb"/><stop offset="1" stop-color="#30adfa"/></linearGradient></defs><path d="M0.5 0.5h15v9h-15z" fill="url(#m5)" stroke="#2d6f9e"/><path d="M7 10h2v1.2h-2z" fill="#b8c6d4"/><path d="M4.2 11.2h7.6v.9h-7.6z" fill="#7f97ae"/><path d="M0.3 13.7h15.4v1.2H0.3z" fill="#8fa2b7"/></svg>
<span class="t" style="left:52.71px;top:126.14px;font-size:12px;line-height:15px;color:#000;transform:scaleX(0.9249);transform-origin:0 50%">KIE-C6PNCP04</span>
<svg style="left:32px;top:150px" width="16" height="16" viewBox="0 0 16 16"><defs><linearGradient id="m6" x1="0" y1="0" x2="1" y2="1"><stop offset="0" stop-color="#8fd0fd"/><stop offset=".5" stop-color="#5abcfb"/><stop offset="1" stop-color="#30adfa"/></linearGradient></defs><path d="M0.5 0.5h15v9h-15z" fill="url(#m6)" stroke="#2d6f9e"/><path d="M7 10h2v1.2h-2z" fill="#b8c6d4"/><path d="M4.2 11.2h7.6v.9h-7.6z" fill="#7f97ae"/><path d="M0.3 13.7h15.4v1.2H0.3z" fill="#8fa2b7"/></svg>
<span class="t" style="left:52.71px;top:150.14px;font-size:12px;line-height:15px;color:#000;transform:scaleX(0.9269);transform-origin:0 50%">KIE-C6PNCP06</span>
<svg style="left:32px;top:174px" width="16" height="16" viewBox="0 0 16 16"><defs><linearGradient id="m7" x1="0" y1="0" x2="1" y2="1"><stop offset="0" stop-color="#8fd0fd"/><stop offset=".5" stop-color="#5abcfb"/><stop offset="1" stop-color="#30adfa"/></linearGradient></defs><path d="M0.5 0.5h15v9h-15z" fill="url(#m7)" stroke="#2d6f9e"/><path d="M7 10h2v1.2h-2z" fill="#b8c6d4"/><path d="M4.2 11.2h7.6v.9h-7.6z" fill="#7f97ae"/><path d="M0.3 13.7h15.4v1.2H0.3z" fill="#8fa2b7"/></svg>
<span class="t" style="left:52.72px;top:174.14px;font-size:12px;line-height:15px;color:#000;transform:scaleX(0.9143);transform-origin:0 50%">KIE-C6VPNLIC01</span>
<svg style="left:32px;top:198px" width="16" height="16" viewBox="0 0 16 16"><defs><linearGradient id="m8" x1="0" y1="0" x2="1" y2="1"><stop offset="0" stop-color="#8fd0fd"/><stop offset=".5" stop-color="#5abcfb"/><stop offset="1" stop-color="#30adfa"/></linearGradient></defs><path d="M0.5 0.5h15v9h-15z" fill="url(#m8)" stroke="#2d6f9e"/><path d="M7 10h2v1.2h-2z" fill="#b8c6d4"/><path d="M4.2 11.2h7.6v.9h-7.6z" fill="#7f97ae"/><path d="M0.3 13.7h15.4v1.2H0.3z" fill="#8fa2b7"/></svg>
<span class="t" style="left:52.77px;top:198.14px;font-size:12px;line-height:15px;color:#000;transform:scaleX(0.8594);transform-origin:0 50%">KIE-DFEVERSA01</span>
<svg style="left:32px;top:222px" width="16" height="16" viewBox="0 0 16 16"><defs><linearGradient id="m9" x1="0" y1="0" x2="1" y2="1"><stop offset="0" stop-color="#8fd0fd"/><stop offset=".5" stop-color="#5abcfb"/><stop offset="1" stop-color="#30adfa"/></linearGradient></defs><path d="M0.5 0.5h15v9h-15z" fill="url(#m9)" stroke="#2d6f9e"/><path d="M7 10h2v1.2h-2z" fill="#b8c6d4"/><path d="M4.2 11.2h7.6v.9h-7.6z" fill="#7f97ae"/><path d="M0.3 13.7h15.4v1.2H0.3z" fill="#8fa2b7"/></svg>
<span class="t" style="left:52.73px;top:222.14px;font-size:12px;line-height:15px;color:#000;transform:scaleX(0.9105);transform-origin:0 50%">KIE-DOCUPROC1</span>
<svg style="left:32px;top:246px" width="16" height="16" viewBox="0 0 16 16"><defs><linearGradient id="m10" x1="0" y1="0" x2="1" y2="1"><stop offset="0" stop-color="#8fd0fd"/><stop offset=".5" stop-color="#5abcfb"/><stop offset="1" stop-color="#30adfa"/></linearGradient></defs><path d="M0.5 0.5h15v9h-15z" fill="url(#m10)" stroke="#2d6f9e"/><path d="M7 10h2v1.2h-2z" fill="#b8c6d4"/><path d="M4.2 11.2h7.6v.9h-7.6z" fill="#7f97ae"/><path d="M0.3 13.7h15.4v1.2H0.3z" fill="#8fa2b7"/></svg>
<span class="t" style="left:52.74px;top:246.14px;font-size:12px;line-height:15px;color:#000;transform:scaleX(0.8920);transform-origin:0 50%">KIE-ESXPN408</span>
<svg style="left:32px;top:270px" width="16" height="16" viewBox="0 0 16 16"><defs><linearGradient id="m11" x1="0" y1="0" x2="1" y2="1"><stop offset="0" stop-color="#8fd0fd"/><stop offset=".5" stop-color="#5abcfb"/><stop offset="1" stop-color="#30adfa"/></linearGradient></defs><path d="M0.5 0.5h15v9h-15z" fill="url(#m11)" stroke="#2d6f9e"/><path d="M7 10h2v1.2h-2z" fill="#b8c6d4"/><path d="M4.2 11.2h7.6v.9h-7.6z" fill="#7f97ae"/><path d="M0.3 13.7h15.4v1.2H0.3z" fill="#8fa2b7"/></svg>
<span class="t" style="left:52.82px;top:270.14px;font-size:12px;line-height:15px;color:#000;transform:scaleX(1.0063);transform-origin:0 50%">kie-heipc55</span>
<div style="left:157px;top:0;width:16px;height:293px;background:#f0f0f0"></div>
<div style="left:157px;top:144px;width:16px;height:48px;background:#cdcdcd"></div>
<svg style="left:160px;top:6.5px" width="9" height="7" viewBox="0 0 9 7"><path d="M0.9 5.6L4.5 2L8.1 5.6" stroke="#4a4a4a" stroke-width="2.1" fill="none"/></svg>
<svg style="left:160px;top:281px" width="9" height="7" viewBox="0 0 9 7"><path d="M0.9 1.4L4.5 5L8.1 1.4" stroke="#4a4a4a" stroke-width="2.1" fill="none"/></svg>
<span class="t" style="left:193.60px;top:7.39px;font-size:12px;line-height:15px;color:#4c607a;transform:scaleX(1.0413);transform-origin:0 50%">Name</span>
<span class="t" style="left:455.20px;top:7.39px;font-size:12px;line-height:15px;color:#4c607a;transform:scaleX(1.0203);transform-origin:0 50%">Änderungsdatum</span>
<span class="t" style="left:598.77px;top:7.39px;font-size:12px;line-height:15px;color:#4c607a;transform:scaleX(0.9677);transform-origin:0 50%">Typ</span>
<span class="t" style="left:718.92px;top:7.39px;font-size:12px;line-height:15px;color:#4c607a;transform:scaleX(0.9715);transform-origin:0 50%">Größe</span>
<div style="left:449px;top:0;width:1px;height:26px;background:#e5e5e5"></div>
<div style="left:592px;top:0;width:1px;height:26px;background:#e5e5e5"></div>
<div style="left:712px;top:0;width:1px;height:26px;background:#e5e5e5"></div>
<div style="left:792px;top:0;width:1px;height:26px;background:#e5e5e5"></div>
<svg style="left:314px;top:1px" width="9" height="5" viewBox="0 0 9 5"><path d="M1 4.5l3.5-3.5L8 4.5" stroke="#777" stroke-width="1" fill="none"/></svg>
<div style="left:191px;top:53px;width:598px;height:22px;background:#cce8ff;border:1px solid #99d1ff"></div>
<svg width="0" height="0" style="left:0;top:0"><defs><linearGradient id="gg" x1="0" y1="0" x2="0" y2="1"><stop offset="0" stop-color="#e6ec5a"/><stop offset=".45" stop-color="#a6dc3c"/><stop offset=".8" stop-color="#3cae2c"/><stop offset=".82" stop-color="#0c5c06"/><stop offset="1" stop-color="#0c5c06"/></linearGradient></defs></svg>
<svg style="left:194px;top:33px" width="18" height="18" viewBox="0 0 18 18"><path d="M1.5 1.5H10L13.5 5V16.5H1.5Z" fill="#fff" stroke="#6a6a6a"/><path d="M9.5 1.5V5.5H13.5" fill="none" stroke="#6a6a6a"/><path d="M3 3.5h1M5 3.5h1M7 3.5h1" stroke="#777"/><path d="M3.5 5.8h5.5" stroke="#c8d4e6" stroke-width=".8"/><path d="M3 7.5h9v8h-9z" fill="url(#gg)"/><path d="M16.2 1.8L8.8 13.6" stroke="#f2a900" stroke-width="2.2"/><path d="M16.6 1.2L15.4 3" stroke="#9a0000" stroke-width="2.2"/><path d="M15.3 3.2L14.5 4.5" stroke="#7f95ad" stroke-width="2.2"/><path d="M8.9 13.3L8 15.4L9.9 14.3Z" fill="#e8c89a" stroke="#8a6a3a" stroke-width=".4"/></svg>
<span class="t" style="left:214.71px;top:36.14px;font-size:12px;line-height:15px;color:#000;transform:scaleX(0.8988);transform-origin:0 50%">910342_LEGUN_BW_1_Back.7.ppf</span>
<span class="t" style="left:454.62px;top:36.14px;font-size:12px;line-height:15px;color:#6d6d6d;transform:scaleX(0.9031);transform-origin:0 50%">08.07.2021 13:22</span>
<span class="t" style="left:598.08px;top:36.14px;font-size:12px;line-height:15px;color:#6d6d6d;transform:scaleX(0.9612);transform-origin:0 50%">PPF-Datei</span>
<span class="t" style="left:745.68px;top:36.14px;font-size:12px;line-height:15px;color:#6d6d6d;transform:scaleX(0.9008);transform-origin:100% 50%">476 KB</span>
<svg style="left:194px;top:54px" width="18" height="18" viewBox="0 0 18 18"><path d="M1.5 1.5H10L13.5 5V16.5H1.5Z" fill="#fff" stroke="#6a6a6a"/><path d="M9.5 1.5V5.5H13.5" fill="none" stroke="#6a6a6a"/><path d="M3 3.5h1M5 3.5h1M7 3.5h1" stroke="#777"/><path d="M3.5 5.8h5.5" stroke="#c8d4e6" stroke-width=".8"/><path d="M3 7.5h9v8h-9z" fill="url(#gg)"/><path d="M16.2 1.8L8.8 13.6" stroke="#f2a900" stroke-width="2.2"/><path d="M16.6 1.2L15.4 3" stroke="#9a0000" stroke-width="2.2"/><path d="M15.3 3.2L14.5 4.5" stroke="#7f95ad" stroke-width="2.2"/><path d="M8.9 13.3L8 15.4L9.9 14.3Z" fill="#e8c89a" stroke="#8a6a3a" stroke-width=".4"/></svg>
<span class="t" style="left:214.71px;top:57.14px;font-size:12px;line-height:15px;color:#000;transform:scaleX(0.9082);transform-origin:0 50%">910342_LEGUN_BW_1_Front.7.ppf</span>
<span class="t" style="left:454.62px;top:57.14px;font-size:12px;line-height:15px;color:#6d6d6d;transform:scaleX(0.9031);transform-origin:0 50%">08.07.2021 13:22</span>
<span class="t" style="left:598.08px;top:57.14px;font-size:12px;line-height:15px;color:#6d6d6d;transform:scaleX(0.9612);transform-origin:0 50%">PPF-Datei</span>
<span class="t" style="left:745.68px;top:57.14px;font-size:12px;line-height:15px;color:#6d6d6d;transform:scaleX(0.9065);transform-origin:100% 50%">534 KB</span>
<svg style="left:194px;top:75px" width="18" height="18" viewBox="0 0 18 18"><path d="M1.5 1.5H10L13.5 5V16.5H1.5Z" fill="#fff" stroke="#6a6a6a"/><path d="M9.5 1.5V5.5H13.5" fill="none" stroke="#6a6a6a"/><path d="M3 3.5h1M5 3.5h1M7 3.5h1" stroke="#777"/><path d="M3.5 5.8h5.5" stroke="#c8d4e6" stroke-width=".8"/><path d="M3 7.5h9v8h-9z" fill="url(#gg)"/><path d="M16.2 1.8L8.8 13.6" stroke="#f2a900" stroke-width="2.2"/><path d="M16.6 1.2L15.4 3" stroke="#9a0000" stroke-width="2.2"/><path d="M15.3 3.2L14.5 4.5" stroke="#7f95ad" stroke-width="2.2"/><path d="M8.9 13.3L8 15.4L9.9 14.3Z" fill="#e8c89a" stroke="#8a6a3a" stroke-width=".4"/></svg>
<span class="t" style="left:214.27px;top:78.14px;font-size:12px;line-height:15px;color:#000;transform:scaleX(0.9702);transform-origin:0 50%">M2021-Sheet01-7ColorJob.1.ppf</span>
<span class="t" style="left:454.62px;top:78.14px;font-size:12px;line-height:15px;color:#6d6d6d;transform:scaleX(0.9019);transform-origin:0 50%">01.07.2021 12:10</span>
<span class="t" style="left:598.08px;top:78.14px;font-size:12px;line-height:15px;color:#6d6d6d;transform:scaleX(0.9612);transform-origin:0 50%">PPF-Datei</span>
<span class="t" style="left:735.71px;top:78.14px;font-size:12px;line-height:15px;color:#6d6d6d;transform:scaleX(0.8992);transform-origin:100% 50%">1.486 KB</span>
<svg style="left:194px;top:96px" width="18" height="18" viewBox="0 0 18 18"><path d="M1.5 1.5H10L13.5 5V16.5H1.5Z" fill="#fff" stroke="#6a6a6a"/><path d="M9.5 1.5V5.5H13.5" fill="none" stroke="#6a6a6a"/><path d="M3 3.5h1M5 3.5h1M7 3.5h1" stroke="#777"/><path d="M3.5 5.8h5.5" stroke="#c8d4e6" stroke-width=".8"/><path d="M3 7.5h9v8h-9z" fill="url(#gg)"/><path d="M16.2 1.8L8.8 13.6" stroke="#f2a900" stroke-width="2.2"/><path d="M16.6 1.2L15.4 3" stroke="#9a0000" stroke-width="2.2"/><path d="M15.3 3.2L14.5 4.5" stroke="#7f95ad" stroke-width="2.2"/><path d="M8.9 13.3L8 15.4L9.9 14.3Z" fill="#e8c89a" stroke="#8a6a3a" stroke-width=".4"/></svg>
<span class="t" style="left:214.26px;top:99.14px;font-size:12px;line-height:15px;color:#000;transform:scaleX(0.9743);transform-origin:0 50%">M2021-Sheet01-7ColorJob.ppf</span>
<span class="t" style="left:454.62px;top:99.14px;font-size:12px;line-height:15px;color:#6d6d6d;transform:scaleX(0.9008);transform-origin:0 50%">06.07.2021 07:44</span>
<span class="t" style="left:598.08px;top:99.14px;font-size:12px;line-height:15px;color:#6d6d6d;transform:scaleX(0.9612);transform-origin:0 50%">PPF-Datei</span>
<span class="t" style="left:735.71px;top:99.14px;font-size:12px;line-height:15px;color:#6d6d6d;transform:scaleX(0.8992);transform-origin:100% 50%">1.486 KB</span>
<svg style="left:194px;top:117px" width="18" height="18" viewBox="0 0 18 18"><path d="M1.5 1.5H10L13.5 5V16.5H1.5Z" fill="#fff" stroke="#6a6a6a"/><path d="M9.5 1.5V5.5H13.5" fill="none" stroke="#6a6a6a"/><path d="M3 3.5h1M5 3.5h1M7 3.5h1" stroke="#777"/><path d="M3.5 5.8h5.5" stroke="#c8d4e6" stroke-width=".8"/><path d="M3 7.5h9v8h-9z" fill="url(#gg)"/><path d="M16.2 1.8L8.8 13.6" stroke="#f2a900" stroke-width="2.2"/><path d="M16.6 1.2L15.4 3" stroke="#9a0000" stroke-width="2.2"/><path d="M15.3 3.2L14.5 4.5" stroke="#7f95ad" stroke-width="2.2"/><path d="M8.9 13.3L8 15.4L9.9 14.3Z" fill="#e8c89a" stroke="#8a6a3a" stroke-width=".4"/></svg>
<span class="t" style="left:214.26px;top:120.14px;font-size:12px;line-height:15px;color:#000;transform:scaleX(0.9743);transform-origin:0 50%">M2022-Sheet01-7ColorJob.ppf</span>
<span class="t" style="left:454.45px;top:120.14px;font-size:12px;line-height:15px;color:#6d6d6d;transform:scaleX(0.9132);transform-origin:0 50%">28.07.2021 11:06</span>
<span class="t" style="left:598.08px;top:120.14px;font-size:12px;line-height:15px;color:#6d6d6d;transform:scaleX(0.9612);transform-origin:0 50%">PPF-Datei</span>
<span class="t" style="left:735.71px;top:120.14px;font-size:12px;line-height:15px;color:#6d6d6d;transform:scaleX(0.8992);transform-origin:100% 50%">1.486 KB</span>
<svg style="left:194px;top:138px" width="18" height="18" viewBox="0 0 18 18"><path d="M1.5 1.5H10L13.5 5V16.5H1.5Z" fill="#fff" stroke="#6a6a6a"/><path d="M9.5 1.5V5.5H13.5" fill="none" stroke="#6a6a6a"/><path d="M3 3.5h1M5 3.5h1M7 3.5h1" stroke="#777"/><path d="M3.5 5.8h5.5" stroke="#c8d4e6" stroke-width=".8"/><path d="M3 7.5h9v8h-9z" fill="url(#gg)"/><path d="M16.2 1.8L8.8 13.6" stroke="#f2a900" stroke-width="2.2"/><path d="M16.6 1.2L15.4 3" stroke="#9a0000" stroke-width="2.2"/><path d="M15.3 3.2L14.5 4.5" stroke="#7f95ad" stroke-width="2.2"/><path d="M8.9 13.3L8 15.4L9.9 14.3Z" fill="#e8c89a" stroke="#8a6a3a" stroke-width=".4"/></svg>
<span class="t" style="left:214.26px;top:141.14px;font-size:12px;line-height:15px;color:#000;transform:scaleX(0.9743);transform-origin:0 50%">M2023-Sheet01-7ColorJob.ppf</span>
<span class="t" style="left:454.46px;top:141.14px;font-size:12px;line-height:15px;color:#6d6d6d;transform:scaleX(0.9049);transform-origin:0 50%">28.07.2021 12:59</span>
<span class="t" style="left:598.08px;top:141.14px;font-size:12px;line-height:15px;color:#6d6d6d;transform:scaleX(0.9612);transform-origin:0 50%">PPF-Datei</span>
<span class="t" style="left:735.71px;top:141.14px;font-size:12px;line-height:15px;color:#6d6d6d;transform:scaleX(0.8992);transform-origin:100% 50%">1.486 KB</span>
<svg style="left:194px;top:159px" width="18" height="18" viewBox="0 0 18 18"><path d="M1.5 1.5H10L13.5 5V16.5H1.5Z" fill="#fff" stroke="#6a6a6a"/><path d="M9.5 1.5V5.5H13.5" fill="none" stroke="#6a6a6a"/><path d="M3 3.5h1M5 3.5h1M7 3.5h1" stroke="#777"/><path d="M3.5 5.8h5.5" stroke="#c8d4e6" stroke-width=".8"/><path d="M3 7.5h9v8h-9z" fill="url(#gg)"/><path d="M16.2 1.8L8.8 13.6" stroke="#f2a900" stroke-width="2.2"/><path d="M16.6 1.2L15.4 3" stroke="#9a0000" stroke-width="2.2"/><path d="M15.3 3.2L14.5 4.5" stroke="#7f95ad" stroke-width="2.2"/><path d="M8.9 13.3L8 15.4L9.9 14.3Z" fill="#e8c89a" stroke="#8a6a3a" stroke-width=".4"/></svg>
<span class="t" style="left:214.28px;top:162.14px;font-size:12px;line-height:15px;color:#000;transform:scaleX(0.9560);transform-origin:0 50%">M7010_FB01-HDBlue.ppf</span>
<span class="t" style="left:454.18px;top:162.14px;font-size:12px;line-height:15px;color:#6d6d6d;transform:scaleX(0.9078);transform-origin:0 50%">19.08.2021 13:29</span>
<span class="t" style="left:598.08px;top:162.14px;font-size:12px;line-height:15px;color:#6d6d6d;transform:scaleX(0.9612);transform-origin:0 50%">PPF-Datei</span>
<span class="t" style="left:735.71px;top:162.14px;font-size:12px;line-height:15px;color:#6d6d6d;transform:scaleX(0.8992);transform-origin:100% 50%">1.645 KB</span>
<svg style="left:194px;top:180px" width="18" height="18" viewBox="0 0 18 18"><path d="M1.5 1.5H10L13.5 5V16.5H1.5Z" fill="#fff" stroke="#6a6a6a"/><path d="M9.5 1.5V5.5H13.5" fill="none" stroke="#6a6a6a"/><path d="M3 3.5h1M5 3.5h1M7 3.5h1" stroke="#777"/><path d="M3.5 5.8h5.5" stroke="#c8d4e6" stroke-width=".8"/><path d="M3 7.5h9v8h-9z" fill="url(#gg)"/><path d="M16.2 1.8L8.8 13.6" stroke="#f2a900" stroke-width="2.2"/><path d="M16.6 1.2L15.4 3" stroke="#9a0000" stroke-width="2.2"/><path d="M15.3 3.2L14.5 4.5" stroke="#7f95ad" stroke-width="2.2"/><path d="M8.9 13.3L8 15.4L9.9 14.3Z" fill="#e8c89a" stroke="#8a6a3a" stroke-width=".4"/></svg>
<span class="t" style="left:214.30px;top:183.14px;font-size:12px;line-height:15px;color:#000;transform:scaleX(0.9398);transform-origin:0 50%">M7010_FB01-JowaBeige.1.ppf</span>
<span class="t" style="left:454.62px;top:183.14px;font-size:12px;line-height:15px;color:#6d6d6d;transform:scaleX(0.9031);transform-origin:0 50%">01.07.2021 12:07</span>
<span class="t" style="left:598.08px;top:183.14px;font-size:12px;line-height:15px;color:#6d6d6d;transform:scaleX(0.9612);transform-origin:0 50%">PPF-Datei</span>
<span class="t" style="left:735.71px;top:183.14px;font-size:12px;line-height:15px;color:#6d6d6d;transform:scaleX(0.8992);transform-origin:100% 50%">1.645 KB</span>
<svg style="left:194px;top:201px" width="18" height="18" viewBox="0 0 18 18"><path d="M1.5 1.5H10L13.5 5V16.5H1.5Z" fill="#fff" stroke="#6a6a6a"/><path d="M9.5 1.5V5.5H13.5" fill="none" stroke="#6a6a6a"/><path d="M3 3.5h1M5 3.5h1M7 3.5h1" stroke="#777"/><path d="M3.5 5.8h5.5" stroke="#c8d4e6" stroke-width=".8"/><path d="M3 7.5h9v8h-9z" fill="url(#gg)"/><path d="M16.2 1.8L8.8 13.6" stroke="#f2a900" stroke-width="2.2"/><path d="M16.6 1.2L15.4 3" stroke="#9a0000" stroke-width="2.2"/><path d="M15.3 3.2L14.5 4.5" stroke="#7f95ad" stroke-width="2.2"/><path d="M8.9 13.3L8 15.4L9.9 14.3Z" fill="#e8c89a" stroke="#8a6a3a" stroke-width=".4"/></svg>
<span class="t" style="left:214.30px;top:204.14px;font-size:12px;line-height:15px;color:#000;transform:scaleX(0.9425);transform-origin:0 50%">M7010_FB01-JowaBeige.ppf</span>
<span class="t" style="left:454.62px;top:204.14px;font-size:12px;line-height:15px;color:#6d6d6d;transform:scaleX(0.9008);transform-origin:0 50%">06.07.2021 07:44</span>
<span class="t" style="left:598.08px;top:204.14px;font-size:12px;line-height:15px;color:#6d6d6d;transform:scaleX(0.9612);transform-origin:0 50%">PPF-Datei</span>
<span class="t" style="left:735.71px;top:204.14px;font-size:12px;line-height:15px;color:#6d6d6d;transform:scaleX(0.8992);transform-origin:100% 50%">1.645 KB</span>
<svg style="left:194px;top:222px" width="18" height="18" viewBox="0 0 18 18"><path d="M1.5 1.5H10L13.5 5V16.5H1.5Z" fill="#fff" stroke="#6a6a6a"/><path d="M9.5 1.5V5.5H13.5" fill="none" stroke="#6a6a6a"/><path d="M3 3.5h1M5 3.5h1M7 3.5h1" stroke="#777"/><path d="M3.5 5.8h5.5" stroke="#c8d4e6" stroke-width=".8"/><path d="M3 7.5h9v8h-9z" fill="url(#gg)"/><path d="M16.2 1.8L8.8 13.6" stroke="#f2a900" stroke-width="2.2"/><path d="M16.6 1.2L15.4 3" stroke="#9a0000" stroke-width="2.2"/><path d="M15.3 3.2L14.5 4.5" stroke="#7f95ad" stroke-width="2.2"/><path d="M8.9 13.3L8 15.4L9.9 14.3Z" fill="#e8c89a" stroke="#8a6a3a" stroke-width=".4"/></svg>
<span class="t" style="left:214.30px;top:225.14px;font-size:12px;line-height:15px;color:#000;transform:scaleX(0.9425);transform-origin:0 50%">M8000_FB01-JowaBeige.ppf</span>
<span class="t" style="left:454.18px;top:225.14px;font-size:12px;line-height:15px;color:#6d6d6d;transform:scaleX(0.9072);transform-origin:0 50%">13.07.2021 13:15</span>
<span class="t" style="left:598.08px;top:225.14px;font-size:12px;line-height:15px;color:#6d6d6d;transform:scaleX(0.9612);transform-origin:0 50%">PPF-Datei</span>
<span class="t" style="left:735.71px;top:225.14px;font-size:12px;line-height:15px;color:#6d6d6d;transform:scaleX(0.8992);transform-origin:100% 50%">1.645 KB</span>
<svg style="left:194px;top:243px" width="18" height="18" viewBox="0 0 18 18"><path d="M1.5 1.5H10L13.5 5V16.5H1.5Z" fill="#fff" stroke="#6a6a6a"/><path d="M9.5 1.5V5.5H13.5" fill="none" stroke="#6a6a6a"/><path d="M3 3.5h1M5 3.5h1M7 3.5h1" stroke="#777"/><path d="M3.5 5.8h5.5" stroke="#c8d4e6" stroke-width=".8"/><path d="M3 7.5h9v8h-9z" fill="url(#gg)"/><path d="M16.2 1.8L8.8 13.6" stroke="#f2a900" stroke-width="2.2"/><path d="M16.6 1.2L15.4 3" stroke="#9a0000" stroke-width="2.2"/><path d="M15.3 3.2L14.5 4.5" stroke="#7f95ad" stroke-width="2.2"/><path d="M8.9 13.3L8 15.4L9.9 14.3Z" fill="#e8c89a" stroke="#8a6a3a" stroke-width=".4"/></svg>
<span class="t" style="left:214.28px;top:246.14px;font-size:12px;line-height:15px;color:#000;transform:scaleX(0.9558);transform-origin:0 50%">M9000_FB01-DieCut.ppf</span>
<span class="t" style="left:454.18px;top:246.14px;font-size:12px;line-height:15px;color:#6d6d6d;transform:scaleX(0.9078);transform-origin:0 50%">13.07.2021 14:17</span>
<span class="t" style="left:598.08px;top:246.14px;font-size:12px;line-height:15px;color:#6d6d6d;transform:scaleX(0.9612);transform-origin:0 50%">PPF-Datei</span>
<span class="t" style="left:735.71px;top:246.14px;font-size:12px;line-height:15px;color:#6d6d6d;transform:scaleX(0.8992);transform-origin:100% 50%">1.645 KB</span>
<svg style="left:194px;top:264px" width="18" height="18" viewBox="0 0 18 18"><path d="M1.5 1.5H10L13.5 5V16.5H1.5Z" fill="#fff" stroke="#6a6a6a"/><path d="M9.5 1.5V5.5H13.5" fill="none" stroke="#6a6a6a"/><path d="M3 3.5h1M5 3.5h1M7 3.5h1" stroke="#777"/><path d="M3.5 5.8h5.5" stroke="#c8d4e6" stroke-width=".8"/><path d="M3 7.5h9v8h-9z" fill="url(#gg)"/><path d="M16.2 1.8L8.8 13.6" stroke="#f2a900" stroke-width="2.2"/><path d="M16.6 1.2L15.4 3" stroke="#9a0000" stroke-width="2.2"/><path d="M15.3 3.2L14.5 4.5" stroke="#7f95ad" stroke-width="2.2"/><path d="M8.9 13.3L8 15.4L9.9 14.3Z" fill="#e8c89a" stroke="#8a6a3a" stroke-width=".4"/></svg>
<span class="t" style="left:214.33px;top:267.14px;font-size:12px;line-height:15px;color:#000;transform:scaleX(0.9029);transform-origin:0 50%">P17344- Wii_U Title Sheets!SF5_WiiU_TTS_...</span>
<span class="t" style="left:454.62px;top:267.14px;font-size:12px;line-height:15px;color:#6d6d6d;transform:scaleX(0.9008);transform-origin:0 50%">06.07.2021 07:44</span>
<span class="t" style="left:598.08px;top:267.14px;font-size:12px;line-height:15px;color:#6d6d6d;transform:scaleX(0.9612);transform-origin:0 50%">PPF-Datei</span>
<span class="t" style="left:735.71px;top:267.14px;font-size:12px;line-height:15px;color:#6d6d6d;transform:scaleX(0.8936);transform-origin:100% 50%">7.758 KB</span>
<svg style="left:194px;top:285px" width="18" height="18" viewBox="0 0 18 18"><path d="M1.5 1.5H10L13.5 5V16.5H1.5Z" fill="#fff" stroke="#6a6a6a"/><path d="M9.5 1.5V5.5H13.5" fill="none" stroke="#6a6a6a"/><path d="M3 3.5h1M5 3.5h1M7 3.5h1" stroke="#777"/><path d="M3.5 5.8h5.5" stroke="#c8d4e6" stroke-width=".8"/><path d="M3 7.5h9v8h-9z" fill="url(#gg)"/><path d="M16.2 1.8L8.8 13.6" stroke="#f2a900" stroke-width="2.2"/><path d="M16.6 1.2L15.4 3" stroke="#9a0000" stroke-width="2.2"/><path d="M15.3 3.2L14.5 4.5" stroke="#7f95ad" stroke-width="2.2"/><path d="M8.9 13.3L8 15.4L9.9 14.3Z" fill="#e8c89a" stroke="#8a6a3a" stroke-width=".4"/></svg>
<span class="t" style="left:214.67px;top:288.14px;font-size:12px;line-height:15px;color:#000;transform:scaleX(0.9907);transform-origin:0 50%">Stanze002651.ppf</span>
<span class="t" style="left:454.62px;top:288.14px;font-size:12px;line-height:15px;color:#6d6d6d;transform:scaleX(0.9025);transform-origin:0 50%">30.06.2021 14:33</span>
<span class="t" style="left:598.08px;top:288.14px;font-size:12px;line-height:15px;color:#6d6d6d;transform:scaleX(0.9612);transform-origin:0 50%">PPF-Datei</span>
<span class="t" style="left:729.00px;top:288.14px;font-size:12px;line-height:15px;color:#6d6d6d;transform:scaleX(0.9076);transform-origin:100% 50%">13.460 KB</span>
<div style="left:900px;top:0;width:16px;height:293px;background:#f0f0f0"></div>
<div style="left:900px;top:18px;width:15px;height:53px;background:#cdcdcd"></div>
<svg style="left:903px;top:6.5px" width="9" height="7" viewBox="0 0 9 7"><path d="M0.9 5.6L4.5 2L8.1 5.6" stroke="#4a4a4a" stroke-width="2.1" fill="none"/></svg>
<svg style="left:903px;top:281px" width="9" height="7" viewBox="0 0 9 7"><path d="M0.9 1.4L4.5 5L8.1 1.4" stroke="#4a4a4a" stroke-width="2.1" fill="none"/></svg>
</div>
<div style="left:2px;top:396px;width:914px;height:75px;background:#f0f0f0"></div>
<span class="t" style="left:129.69px;top:410.39px;font-size:12px;line-height:15px;color:#000;transform:scaleX(0.9901);transform-origin:100% 50%">Dateiname:</span>
<div style="left:196px;top:405px;width:504px;height:24px;background:#fff;border:1px solid #7a7a7a"></div>
<span class="t" style="left:199.51px;top:410.89px;font-size:12px;line-height:15px;color:#000;transform:scaleX(0.9135);transform-origin:0 50%">910342_LEGUN_BW_1_Front.7.ppf</span>
<svg style="left:686px;top:414.5px" width="10" height="6" viewBox="0 0 10 6"><path d="M0.8 0.8l4.2 4.2 4.2-4.2" stroke="#444" stroke-width="1" fill="none"/></svg>
<div style="left:712px;top:405px;width:188px;height:23px;background:#e1e1e1;border:1px solid #adadad"></div>
<span class="t" style="left:715.35px;top:410.14px;font-size:12px;line-height:15px;color:#000;transform:scaleX(0.9866);transform-origin:0 50%">PPF-Datei (*.ppf)</span>
<svg style="left:886px;top:414px" width="10" height="6" viewBox="0 0 10 6"><path d="M0.8 0.8l4.2 4.2 4.2-4.2" stroke="#444" stroke-width="1" fill="none"/></svg>
<div style="left:713px;top:435px;width:86px;height:24px;background:#e1e1e1;border:2px solid #0078d7"></div>
<span class="t" style="left:737.80px;top:440.14px;font-size:12px;line-height:15px;color:#000;transform:scaleX(1.0503);transform-origin:50% 50%">Öffnen</span>
<div style="left:813px;top:435px;width:86px;height:24px;background:#e1e1e1;border:1px solid #adadad"></div>
<span class="t" style="left:826.98px;top:440.14px;font-size:12px;line-height:15px;color:#000;transform:scaleX(1.0035);transform-origin:50% 50%">Abbrechen</span>
<div style="left:912px;top:463px;width:2px;height:2px;background:#bfbfbf"></div>
<div style="left:909px;top:466px;width:2px;height:2px;background:#bfbfbf"></div>
<div style="left:912px;top:466px;width:2px;height:2px;background:#bfbfbf"></div>
<div style="left:906px;top:469px;width:2px;height:2px;background:#bfbfbf"></div>
<div style="left:909px;top:469px;width:2px;height:2px;background:#bfbfbf"></div>
<div style="left:912px;top:469px;width:2px;height:2px;background:#bfbfbf"></div>
</div></div>
</div></body></html>
